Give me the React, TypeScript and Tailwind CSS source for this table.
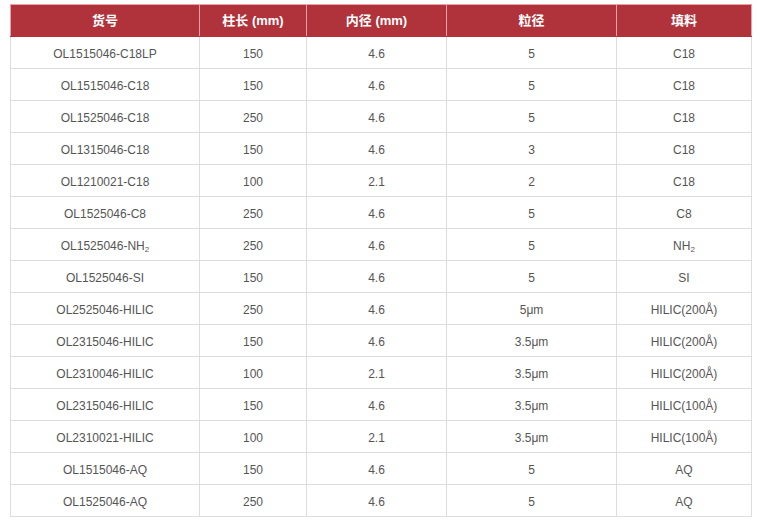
const rows: [string, string, string, string, string][] = [
  ['OL1515046-C18LP', '150', '4.6', '5', 'C18'],
  ['OL1515046-C18', '150', '4.6', '5', 'C18'],
  ['OL1525046-C18', '250', '4.6', '5', 'C18'],
  ['OL1315046-C18', '150', '4.6', '3', 'C18'],
  ['OL1210021-C18', '100', '2.1', '2', 'C18'],
  ['OL1525046-C8', '250', '4.6', '5', 'C8'],
  ['OL1525046-NH2', '250', '4.6', '5', 'NH2'],
  ['OL1525046-SI', '150', '4.6', '5', 'SI'],
  ['OL2525046-HILIC', '250', '4.6', '5μm', 'HILIC(200Å)'],
  ['OL2315046-HILIC', '150', '4.6', '3.5μm', 'HILIC(200Å)'],
  ['OL2310046-HILIC', '100', '2.1', '3.5μm', 'HILIC(200Å)'],
  ['OL2315046-HILIC', '150', '4.6', '3.5μm', 'HILIC(100Å)'],
  ['OL2310021-HILIC', '100', '2.1', '3.5μm', 'HILIC(100Å)'],
  ['OL1515046-AQ', '150', '4.6', '5', 'AQ'],
  ['OL1525046-AQ', '250', '4.6', '5', 'AQ'],
];

const headers = ['货号', '柱长 (mm)', '内径 (mm)', '粒径', '填料'];

// render "NH2" with a subscript 2
function Cell({ text }: { text: string }) {
  if (text.endsWith('NH2')) {
    return (
      <>
        {text.slice(0, -1)}
        <sub className="text-[8px] align-baseline relative top-[2px]">2</sub>
      </>
    );
  }
  return <>{text}</>;
}

export default function App() {
  return (
    <main className="min-h-screen bg-white pt-[4px] pl-[10px]">
      <table className="table-fixed border-collapse w-[741px] font-['Liberation_Sans','Noto_Sans_CJK_SC',sans-serif] text-[12px]">
        <colgroup>
          <col className="w-[189px]" />
          <col className="w-[107px]" />
          <col className="w-[140px]" />
          <col className="w-[170px]" />
          <col className="w-[135px]" />
        </colgroup>
        <thead>
          <tr className="bg-[#b0323a] h-[32px]">
            {headers.map((h) => (
              <th
                key={h}
                className="border border-[#e9a3a7] border-b-[#b0323a] text-white font-bold text-[13px] text-center p-0"
              >
                {h}
              </th>
            ))}
          </tr>
        </thead>
        <tbody>
          {rows.map((r, i) => (
            <tr key={i} className="h-[32px]">
              {r.map((c, j) => (
                <td
                  key={j}
                  className="border border-[#dddddd] text-[#555555] text-center p-0 pt-[2px]"
                >
                  <Cell text={c} />
                </td>
              ))}
            </tr>
          ))}
        </tbody>
      </table>
    </main>
  );
}
